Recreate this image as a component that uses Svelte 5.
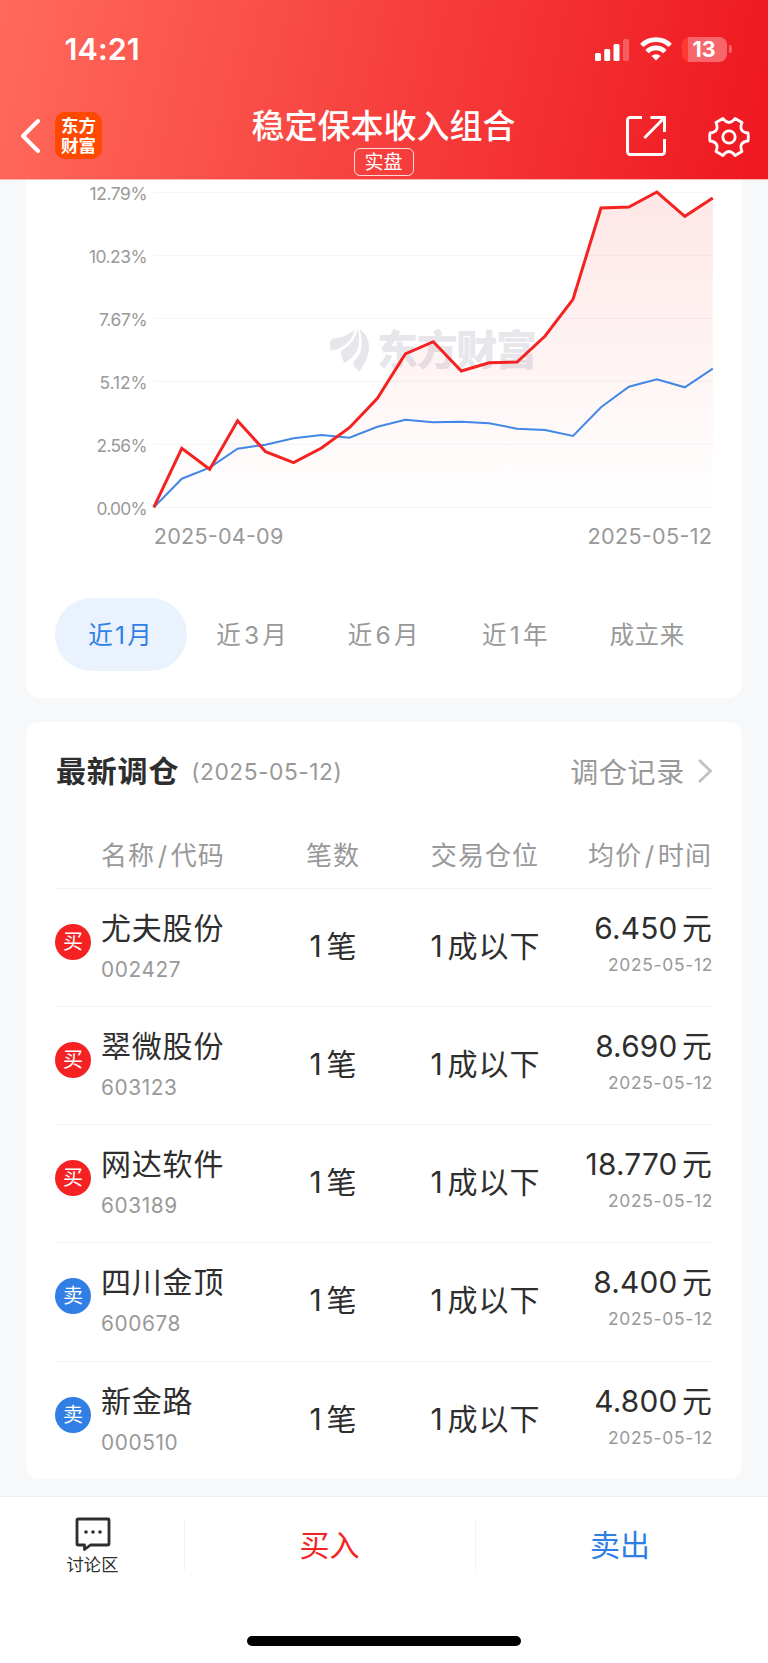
<script lang="ts">
	type Trade = {
		side: 'buy' | 'sell';
		name: string;
		code: string;
		price: string;
		date: string;
	};

	const ranges = [
		['近', '1', '月'],
		['近', '3', '月'],
		['近', '6', '月'],
		['近', '1', '年'],
		['成立来', '', '']
	];
	let active = $state(0);

	const trades: Trade[] = [
		{ side: 'buy', name: '尤夫股份', code: '002427', price: '6.450', date: '2025-05-12' },
		{ side: 'buy', name: '翠微股份', code: '603123', price: '8.690', date: '2025-05-12' },
		{ side: 'buy', name: '网达软件', code: '603189', price: '18.770', date: '2025-05-12' },
		{ side: 'sell', name: '四川金顶', code: '600678', price: '8.400', date: '2025-05-12' },
		{ side: 'sell', name: '新金路', code: '000510', price: '4.800', date: '2025-05-12' }
	];

	// chart geometry, in svg units
	const left = 127.8;
	const right = 686.8;
	const base = 327.4;
	const step = (right - left) / 20;

	const ticks = [
		{ label: '12.79%', y: 12.4, w: 58 },
		{ label: '10.23%', y: 75.4, w: 58.5 },
		{ label: '7.67%', y: 138.4, w: 48.5 },
		{ label: '5.12%', y: 201.4, w: 48 },
		{ label: '2.56%', y: 264.4, w: 51 },
		{ label: '0.00%', y: 327.4, w: 51 }
	];

	const portfolio = [
		327.4, 268.3, 289.3, 240.7, 271.7, 282.7, 268, 247.7, 218.3, 174, 161.7, 191, 182.7, 182, 156,
		119.3, 28, 27, 12, 36.3, 18
	];
	const index = [
		327.4, 298.7, 287.7, 268.7, 264.7, 258.3, 255, 257.7, 246.7, 239.7, 242.3, 241.7, 243.3, 248.7,
		250, 256, 227.3, 206.7, 199.3, 207.3, 188.7
	];

	function points(values: number[]): string {
		return values.map((y, i) => `${(left + i * step).toFixed(1)},${y}`).join(' ');
	}

	const area = `${left},${base} ${points(portfolio)} ${right},${base}`;
</script>

<div class="page">
	<header class="top">
		<div class="status">
			<span class="clock">14:21</span>
			<div class="indicators">
				<svg class="signal" viewBox="0 0 34 24" fill="#fff">
					<rect x="0" y="16" width="6" height="8" rx="1.6" />
					<rect x="9.2" y="12" width="6" height="12" rx="1.6" />
					<rect x="18.5" y="7" width="6" height="17" rx="1.6" />
					<rect x="28" y="2" width="6" height="22" rx="1.6" opacity="0.25" />
				</svg>
				<svg class="wifi" viewBox="0 0 32 24" fill="none" stroke="#fff" stroke-width="4.6">
					<path d="M1.7 8.4a20.5 20.5 0 0 1 28.6 0" />
					<path d="M7 14.6a12.7 12.7 0 0 1 18 0" />
					<path d="M16 23.6l-4.5-4.5a6.4 6.4 0 0 1 9 0z" fill="#fff" stroke="none" />
				</svg>
				<div class="battery"><span>13</span></div>
				<i class="nub"></i>
			</div>
		</div>
		<nav class="nav">
			<div class="nav-left">
				<svg class="back" viewBox="0 0 20 34" fill="none" stroke="#fff" stroke-width="4">
					<path d="M18 2 3 17l15 15" stroke-linecap="round" stroke-linejoin="round" />
				</svg>
				<div class="logo"><span>东方</span><span>财富</span></div>
			</div>
			<div class="heading">
				<h1>稳定保本收入组合</h1>
				<span class="tag">实盘</span>
			</div>
			<div class="nav-right">
				<svg class="share" viewBox="0 0 40 40" fill="none" stroke="#fff" stroke-width="3">
					<path d="M16 1.5H4.2a2.7 2.7 0 0 0-2.7 2.7v31.6a2.7 2.7 0 0 0 2.7 2.7h31.6a2.7 2.7 0 0 0 2.7-2.7V23" />
					<path d="M24.5 1.5h14V16M38 2 18.4 22" />
				</svg>
				<svg class="gear" viewBox="-21 -21 42 42" fill="none" stroke="#fff" stroke-width="2.8" stroke-linejoin="round">
					<path d="M-6-18.5Q0-10.5 6-18.5L13-14.5Q9.1-5.3 19-4Q19.6 0 19 4Q9.1 5.3 13 14.5L6 18.5Q0 10.5-6 18.5L-13 14.5Q-9.1 5.3-19 4Q-19.6 0-19-4Q-9.1-5.3-13-14.5Z" />
					<circle r="6.2" />
				</svg>
			</div>
		</nav>
	</header>

	<main>
		<section class="card chart-card">
			<svg class="chart" viewBox="0 0 716 384">
				<defs>
					<linearGradient id="fade" x1="0" y1="0" x2="0" y2="1">
						<stop offset="0" stop-color="#f52020" stop-opacity="0.11" />
						<stop offset="1" stop-color="#f52020" stop-opacity="0" />
					</linearGradient>
				</defs>
				{#each ticks as tick}
					<line x1={left} x2={right} y1={tick.y} y2={tick.y} stroke="#f5f5f6" stroke-width="1.2" />
					<text class="tick" x="121.5" y={tick.y + 7.2} textLength={tick.w}>{tick.label}</text>
				{/each}
				<g class="watermark">
					<path d="M304 163q0-4 4-4.5C317 157 323 155 329 149 326 162 317 168 304.5 171z" />
					<path d="M331.5 148.5C329 160 325 164 318 169c-3 2-3.5 4-2.5 7l2.7 7C331 176 336 166 331.5 148.5z" />
					<path d="M333.5 149c9 6 11.5 16 8 27-1.5 5-4 10-8 15.5-3-2-7-5-6-10C336 174 338 164 333.5 149z" />
					<text x="351" y="184.5" textLength="160">东方财富</text>
				</g>
				<polygon points={area} fill="url(#fade)" />
				<polyline points={points(index)} fill="none" stroke="#4287e6" stroke-width="2" />
				<polyline points={points(portfolio)} fill="none" stroke="#f52222" stroke-width="3" />
				<text class="day" x="127.8" y="363.6" textLength="129.5">2025-04-09</text>
				<text class="day" x="561.5" y="363.6" textLength="124.5">2025-05-12</text>
			</svg>
			<div class="ranges">
				{#each ranges as [before, num, after], i}
					<button class:active={active === i} onclick={() => (active = i)}>
						{before}{#if num}<span>{num}</span>{/if}{after}
					</button>
				{/each}
			</div>
		</section>

		<section class="card trades">
			<div class="trades-head">
				<h2>最新调仓</h2>
				<span class="trades-date">(2025-05-12)</span>
				<a class="more" href="#records">
					调仓记录
					<svg viewBox="0 0 16 26" fill="none" stroke="#c2c2c2" stroke-width="2.8">
						<path d="M2 2l11.5 11L2 24" />
					</svg>
				</a>
			</div>
			<div class="row labels">
				<span></span>
				<span>名称<i>/</i>代码</span>
				<span class="mid">笔数</span>
				<span class="mid">交易仓位</span>
				<span class="end">均价<i>/</i>时间</span>
			</div>
			{#each trades as trade}
				<div class="row trade">
					<span class="badge {trade.side}">{trade.side === 'buy' ? '买' : '卖'}</span>
					<div>
						<div class="name">{trade.name}</div>
						<div class="code">{trade.code}</div>
					</div>
					<div class="mid amount"><span>1</span>笔</div>
					<div class="mid amount"><span>1</span>成以下</div>
					<div class="end">
						<div class="price"><span>{trade.price}</span>元</div>
						<div class="date">{trade.date}</div>
					</div>
				</div>
			{/each}
		</section>
	</main>

	<footer>
		<div class="actions">
			<button class="forum">
				<svg viewBox="0 0 36 34" fill="none" stroke="#2e2e2e" stroke-width="2.8" stroke-linejoin="round">
					<path d="M3 2h30a1 1 0 0 1 1 1v24a1 1 0 0 1-1 1H15.5L9.5 32.500V28H3a1 1 0 0 1-1-1V3a1 1 0 0 1 1-1z" />
					<g fill="#2e2e2e" stroke="none">
						<circle cx="11" cy="15" r="1.8" />
						<circle cx="18" cy="15" r="1.8" />
						<circle cx="25" cy="15" r="1.8" />
					</g>
				</svg>
				讨论区
			</button>
			<button class="buy-btn">买入</button>
			<button class="sell-btn">卖出</button>
		</div>
		<div class="home"></div>
	</footer>
</div>

<style>
	:global(body) {
		background: #f6f8fa;
	}
	.page {
		width: 768px;
		height: 1663px;
		display: flex;
		flex-direction: column;
		overflow: hidden;
		background: #f6f8fa;
		color: #2e2e2e;
		font-family: Inter, 'Noto Sans CJK SC', sans-serif;
	}
	button {
		border: none;
		padding: 0;
		background: none;
		font-family: inherit;
	}
	i {
		font-style: normal;
	}
	svg {
		display: block;
	}

	.top {
		height: 179px;
		background: linear-gradient(102deg, #ff6a5b 0%, #ef1922 97%);
		border-bottom: 1px solid #fcb5b3;
		color: #fff;
	}
	.status {
		height: 96px;
		display: flex;
		justify-content: space-between;
		align-items: center;
		padding: 2px 36px 0 64.5px;
		box-sizing: border-box;
	}
	.clock {
		margin-top: -2px;
		font-size: 30.5px;
		font-weight: 600;
		letter-spacing: 0.1px;
	}
	.indicators {
		display: flex;
		align-items: center;
	}
	.signal {
		width: 34px;
		height: 24px;
	}
	.wifi {
		width: 32px;
		height: 24px;
		margin: 0 10.5px;
	}
	.battery {
		width: 45px;
		height: 25px;
		border-radius: 8px;
		background: linear-gradient(90deg, #ff3b30 13%, #f7666b 13%);
		display: flex;
		align-items: center;
		justify-content: center;
		font-size: 21.5px;
		font-weight: 700;
		line-height: 25px;
	}
	.battery span {
		padding-right: 1px;
	}
	.nub {
		width: 3px;
		height: 8px;
		margin-left: 2px;
		border-radius: 0 4px 4px 0;
		background: #f7666b;
	}
	.nav {
		height: 83px;
		display: grid;
		grid-template-columns: 1fr auto 1fr;
	}
	.nav-left {
		display: flex;
		align-items: flex-start;
		padding: 16px 0 0 20px;
	}
	.back {
		width: 20px;
		height: 34px;
		margin: 7px 15px 0 0;
	}
	.logo {
		width: 47px;
		height: 47px;
		border-radius: 10px;
		background: #ff4800;
		display: flex;
		flex-direction: column;
		align-items: center;
		justify-content: center;
		font-size: 17.5px;
		font-weight: 700;
		line-height: 19.5px;
	}
	.heading {
		display: flex;
		flex-direction: column;
		align-items: center;
		padding: 8.5px 1px 0 0;
	}
	h1 {
		margin: 0;
		font-size: 33px;
		font-weight: 500;
		line-height: 42px;
	}
	.tag {
		margin-top: 1.5px;
		width: 60px;
		height: 28px;
		box-sizing: border-box;
		border: 1.5px solid #ffffffd0;
		border-radius: 6px;
		font-size: 19px;
		line-height: 27px;
		text-align: center;
	}
	.nav-right {
		display: flex;
		justify-content: flex-end;
		padding: 20px 18px 0 0;
	}
	.share {
		width: 40px;
		height: 40px;
		margin-right: 42.5px;
	}
	.gear {
		width: 42px;
		height: 42px;
	}

	main {
		flex: 1;
		padding: 0 26px;
	}
	.card {
		background: #fff;
		border-radius: 14px;
	}
	.chart-card {
		height: 518px;
		border-radius: 0 0 14px 14px;
		margin-bottom: 24px;
	}
	.chart {
		width: 716px;
		height: 384px;
	}
	.tick {
		fill: #999;
		font-size: 17.4px;
		text-anchor: end;
	}
	.day {
		fill: #999;
		font-size: 21.6px;
	}
	.watermark {
		fill: #e6e6eb;
		font-size: 41px;
		font-weight: 900;
	}
	.ranges {
		display: grid;
		grid-template-columns: repeat(5, 1fr);
		padding: 33.5px 29px 0;
	}
	.ranges button {
		height: 73px;
		border-radius: 37px;
		padding: 0 1px 1px 0;
		color: #999;
		font-size: 24.5px;
		letter-spacing: 0.7px;
	}
	.ranges button:last-child {
		padding-right: 0;
	}
	.ranges button span {
		margin: 0 2.5px;
	}
	.ranges .active {
		background: #e9f2fd;
		color: #2f7fe6;
	}
	.ranges .active span {
		margin: 0 1.5px;
	}

	.trades {
		height: 757px;
		padding: 0 29px;
	}
	.trades-head {
		height: 98px;
		display: flex;
		align-items: center;
	}
	h2 {
		margin: -4px 0 0 1px;
		font-size: 30px;
		font-weight: 700;
		letter-spacing: 0.8px;
	}
	.trades-date {
		margin-left: 12px;
		color: #999;
		font-size: 22.8px;
		letter-spacing: 0.5px;
	}
	.more {
		display: flex;
		align-items: center;
		margin-left: auto;
		color: #999;
		font-size: 28px;
		letter-spacing: 0.7px;
		text-decoration: none;
	}
	.more svg {
		width: 16px;
		height: 26px;
		margin-left: 12px;
	}
	.row {
		display: grid;
		grid-template-columns: 46px 158px 148px 156px 150px;
		box-sizing: border-box;
		border-bottom: 1px solid #f3f3f5;
	}
	.labels {
		height: 69px;
		line-height: 72px;
		color: #999;
		font-size: 26px;
		letter-spacing: 1.1px;
	}
	.labels i {
		margin: 0 2.5px;
	}
	.labels .end {
		padding-right: 1px;
	}
	.mid {
		text-align: center;
	}
	.end {
		text-align: right;
	}
	.trade {
		height: 118.15px;
		padding-top: 19px;
	}
	.trade:last-child {
		border-bottom: none;
	}
	.badge {
		width: 36px;
		height: 36px;
		margin-top: 16px;
		border-radius: 50%;
		color: #fff;
		font-size: 20px;
		line-height: 37px;
		text-align: center;
	}
	.buy {
		background: #f52224;
	}
	.sell {
		background: #317fe5;
	}
	.name {
		font-size: 30px;
		line-height: 40px;
		letter-spacing: 0.8px;
	}
	.code {
		margin-top: 10px;
		color: #999;
		font-size: 20.8px;
		line-height: 24px;
		letter-spacing: 0.6px;
	}
	.amount {
		margin-top: 18px;
		padding-left: 1px;
		font-size: 30px;
		line-height: 40px;
		letter-spacing: 1px;
	}
	.amount span {
		margin-right: 4px;
	}
	.price {
		padding-right: 1px;
		font-size: 29.8px;
		line-height: 40px;
		letter-spacing: 0.2px;
	}
	.price span {
		margin-right: 4.5px;
	}
	.date {
		margin-top: 5px;
		color: #999;
		font-size: 17.4px;
		line-height: 24px;
		letter-spacing: 0.7px;
	}

	footer {
		height: 166px;
		background: #fff;
		border-top: 1px solid #efeff2;
	}
	.actions {
		display: grid;
		grid-template-columns: 185px 291px 1fr;
		align-items: center;
		padding-top: 22px;
	}
	.actions button {
		height: 51px;
		border-right: 1px solid #f1f1f3;
		padding-bottom: 3px;
		font-size: 30px;
	}
	.actions button:last-child {
		border: none;
		padding-right: 4px;
	}
	.actions .forum {
		height: 51px;
		display: flex;
		flex-direction: column;
		align-items: center;
		padding: 0 0 0 1px;
		color: #2e2e2e;
		font-size: 17.3px;
		line-height: 24px;
	}
	.forum svg {
		flex: none;
		width: 36px;
		height: 34px;
		margin: -2px 0 2px;
	}
	.actions .buy-btn {
		padding-right: 1px;
		color: #f52222;
	}
	.actions .sell-btn {
		color: #2f7fe6;
	}
	.home {
		width: 274px;
		height: 10px;
		margin: 66px auto 0;
		border-radius: 5px;
		background: #000;
	}
</style>
